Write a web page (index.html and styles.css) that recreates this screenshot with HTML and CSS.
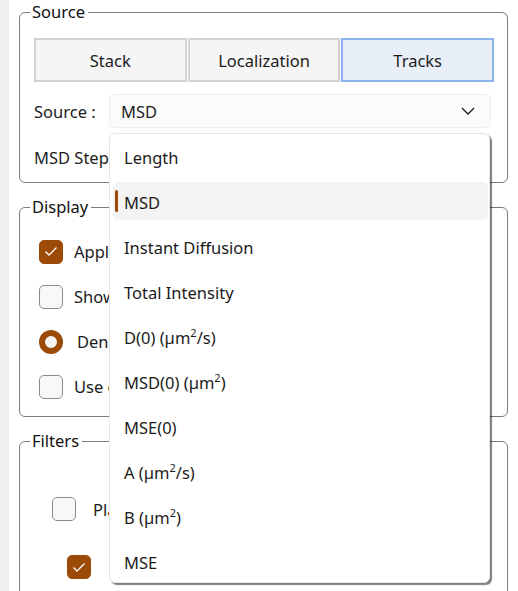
FILE: index.html
```html
<!DOCTYPE html>
<html lang="en">
<head>
<meta charset="utf-8">
<title>Tracks settings</title>
<link rel="stylesheet" href="styles.css">
</head>
<body>
<div class="panel">
  <fieldset class="group group-source">
    <legend>Source</legend>
    <div class="group-body body-source">
      <div class="tabs">
        <button class="tab">Stack</button>
        <button class="tab">Localization</button>
        <button class="tab tab-active">Tracks</button>
      </div>
      <div class="row row-combo">
        <span class="label">Source :</span>
        <div class="combo">
          <span class="combo-value">MSD</span>
          <svg class="chevron" width="14" height="8" viewBox="0 0 14 8"><path d="M1 1 L7 7 L13 1" fill="none" stroke="#1b1b1b" stroke-width="1.3"/></svg>
        </div>
      </div>
      <div class="row row-step">
        <span class="label">MSD Steps :</span>
      </div>
    </div>
  </fieldset>

  <fieldset class="group group-display">
    <legend>Display</legend>
    <div class="group-body body-display">
      <div class="opt"><span class="check checked"><svg width="14" height="11" viewBox="0 0 14 11"><path d="M1.5 5.5 L5 9 L12.5 1.5" fill="none" stroke="#fff" stroke-width="1.3"/></svg></span><span class="opt-label">Apply filters</span></div>
      <div class="opt"><span class="check"></span><span class="opt-label">Show tracks</span></div>
      <div class="opt"><span class="radio"></span><span class="opt-label opt-label-radio">Density</span></div>
      <div class="opt"><span class="check"></span><span class="opt-label">Use colormap</span></div>
    </div>
  </fieldset>

  <fieldset class="group group-filters">
    <legend>Filters</legend>
    <div class="group-body body-filters">
      <div class="opt opt-l1"><span class="check"></span><span class="opt-label opt-label-f">Plane</span></div>
      <div class="opt opt-l2"><span class="check checked"><svg width="14" height="11" viewBox="0 0 14 11"><path d="M1.5 5.5 L5 9 L12.5 1.5" fill="none" stroke="#fff" stroke-width="1.3"/></svg></span><span class="opt-label opt-label-f">Length</span></div>
    </div>
  </fieldset>

  <ul class="popup">
    <li class="item"><span class="item-text">Length</span></li>
    <li class="item item-selected"><span class="accent"></span><span class="item-text">MSD</span></li>
    <li class="item"><span class="item-text">Instant Diffusion</span></li>
    <li class="item"><span class="item-text">Total Intensity</span></li>
    <li class="item"><span class="item-text">D(0) (µm<sup>2</sup>/s)</span></li>
    <li class="item"><span class="item-text">MSD(0) (µm<sup>2</sup>)</span></li>
    <li class="item"><span class="item-text">MSE(0)</span></li>
    <li class="item"><span class="item-text">A (µm<sup>2</sup>/s)</span></li>
    <li class="item"><span class="item-text">B (µm<sup>2</sup>)</span></li>
    <li class="item"><span class="item-text">MSE</span></li>
  </ul>
</div>
</body>
</html>
```

FILE: styles.css
```css
html, body {
  margin: 0;
  padding: 0;
}
body {
  background: #f0f0f0;
  font-family: "Noto Sans", "Open Sans", sans-serif;
  font-size: 16.5px;
  color: #1b1b1b;
  width: 518px;
  height: 591px;
  overflow: hidden;
}
.panel {
  position: relative;
  margin-left: 9px;
  background: #ffffff;
  height: 591px;
  padding-top: 1px;
  box-sizing: border-box;
  overflow: hidden;
}
.group {
  margin: 0 0 0 10px;
  width: 489px;
  box-sizing: border-box;
  border: 1px solid #7c7c7c;
  border-radius: 6px;
  padding: 0;
  min-width: 0;
}
.group legend {
  padding: 0 3px 0 2px;
  margin-left: 10px;
  line-height: 22px;
  font-size: 16.5px;
  color: #111;
}
.body-source {
  padding: 15px 13px 8px 14px;
}
.tabs {
  display: grid;
  grid-template-columns: 1fr 1fr 1fr;
  gap: 1px;
  height: 44px;
}
.tab {
  font-family: inherit;
  font-size: 16.5px;
  color: #1b1b1b;
  background: #f5f5f5;
  border: 2px solid #d3d3d3;
  margin: 0;
  padding: 0;
}
.tab-active {
  background: #e9eff8;
  border-color: #8cb3ec;
}
.row {
  display: flex;
  align-items: center;
  height: 34px;
  margin-top: 12px;
}
.label {
  width: 75px;
  flex: none;
  white-space: nowrap;
}
.combo {
  flex: 1;
  margin-right: 3px;
  height: 34px;
  box-sizing: border-box;
  background: #fbfbfb;
  border: 1px solid #efefef;
  border-radius: 5px;
  display: flex;
  align-items: center;
  padding: 0 15px 0 11px;
}
.combo-value {
  flex: 1;
}
.chevron {
  display: block;
}
.group-display {
  margin-top: 13px;
}
.body-display {
  padding: 11px 13px 7px 19px;
}
.opt {
  display: flex;
  align-items: center;
  height: 45px;
}
.check {
  width: 24px;
  height: 24px;
  box-sizing: border-box;
  border: 1px solid #8a8a8a;
  border-radius: 5px;
  background: #f8f8f8;
  flex: none;
  display: flex;
  align-items: center;
  justify-content: center;
}
.check.checked {
  background: #9c4a08;
  border-color: #9c4a08;
}
.check svg {
  display: block;
}
.radio {
  width: 24px;
  height: 24px;
  box-sizing: border-box;
  border: 6px solid #9c4a08;
  border-radius: 50%;
  background: #f3f3f3;
  flex: none;
}
.opt-label {
  margin-left: 11px;
  white-space: nowrap;
}
.opt-label-radio {
  margin-left: 14px;
}
.opt-label-f {
  margin-left: 17px;
}
.group-filters {
  margin-top: 13px;
  height: 180px;
}
.body-filters {
  padding: 35px 13px 0 32px;
}
.opt-l1 {
  height: 44px;
}
.opt-l2 {
  height: 44px;
  margin-top: 14px;
  padding-left: 15px;
}
.popup {
  position: absolute;
  left: 100px;
  top: 133px;
  width: 381px;
  height: 450px;
  box-sizing: border-box;
  margin: 0;
  padding: 1px 0 0 0;
  list-style: none;
  background: #ffffff;
  border: 1px solid #e6e6e6;
  border-radius: 6px;
  box-shadow: 2px 2px 1px rgba(0, 0, 0, 0.5);
}
.item {
  position: relative;
  height: 45px;
  line-height: 45px;
  padding-left: 14px;
  white-space: nowrap;
}
.item-text {
  position: relative;
}
.item sup {
  font-size: 11px;
  line-height: 0;
  vertical-align: 0;
  position: relative;
  top: -7px;
}
.item-selected::before {
  content: "";
  position: absolute;
  left: 3px;
  right: 1px;
  top: 2px;
  bottom: 5px;
  background: #f3f3f3;
  border-radius: 5px;
}
.accent {
  position: absolute;
  left: 5px;
  top: 10px;
  width: 3px;
  height: 22px;
  border-radius: 2px;
  background: #9c4a08;
}
```
